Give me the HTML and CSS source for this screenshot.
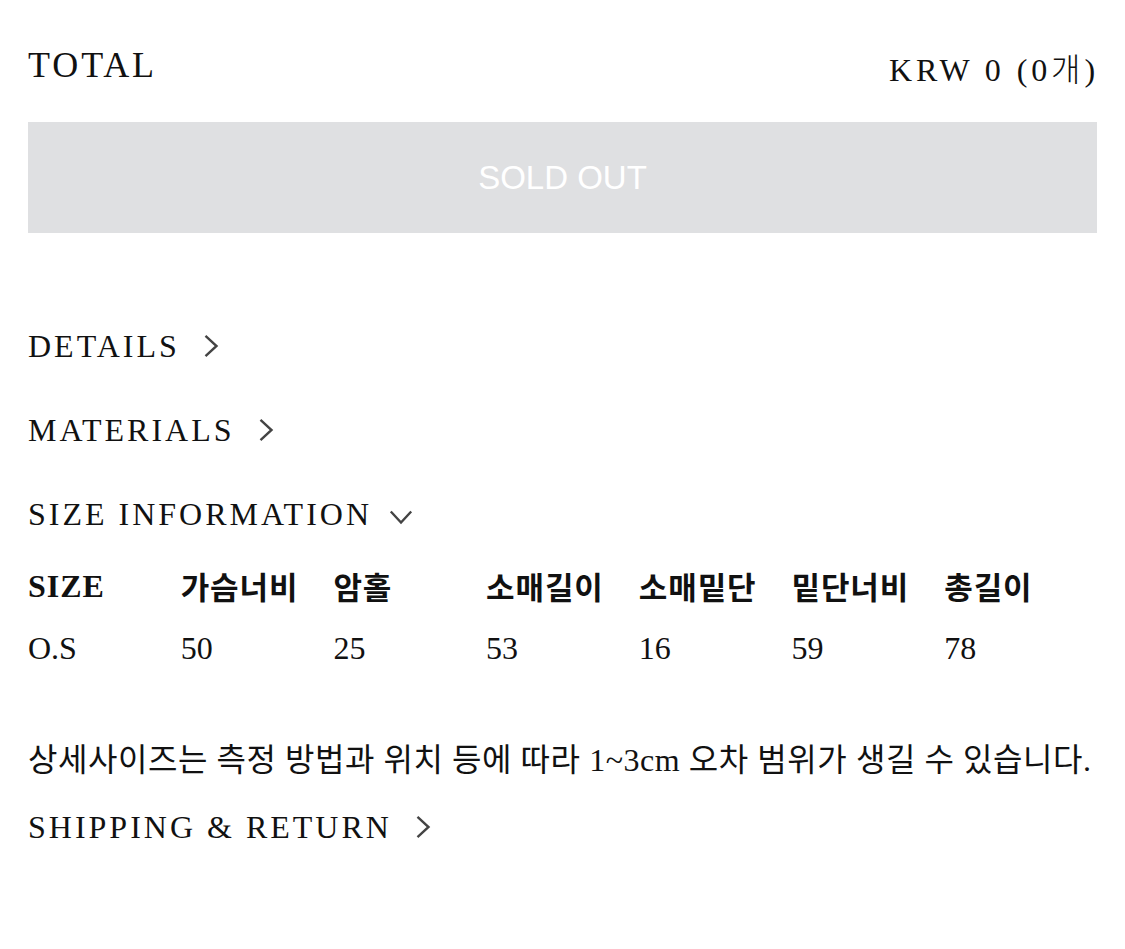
FILE: index.html
```html
<!DOCTYPE html>
<html lang="ko">
<head>
<meta charset="utf-8">
<title>Product</title>
<link rel="stylesheet" href="styles.css">
</head>
<body>
<div class="page">
  <div class="total-row">
    <span class="total-label">TOTAL</span>
    <span class="total-price">KRW 0 (0<span class="ko">개</span>)</span>
  </div>
  <button class="sold-out" type="button">SOLD OUT</button>

  <div class="acc">
    <div class="acc-item">
      <span class="acc-title">DETAILS</span>
      <svg class="chev-right" width="16" height="24" viewBox="0 0 16 24"><polyline points="2.5,1.8 13.5,12 2.5,22.2" fill="none" stroke="#444" stroke-width="2.4"/></svg>
    </div>
    <div class="acc-item">
      <span class="acc-title">MATERIALS</span>
      <svg class="chev-right" width="16" height="24" viewBox="0 0 16 24"><polyline points="2.5,1.8 13.5,12 2.5,22.2" fill="none" stroke="#444" stroke-width="2.4"/></svg>
    </div>
    <div class="acc-item">
      <span class="acc-title">SIZE INFORMATION</span>
      <svg class="chev-down" width="24" height="16" viewBox="0 0 24 16"><polyline points="1.8,2.5 12,13.5 22.2,2.5" fill="none" stroke="#444" stroke-width="2.4"/></svg>
    </div>
  </div>

  <table class="size-table">
    <thead>
      <tr>
        <th class="th-latin">SIZE</th>
        <th>가슴너비</th>
        <th>암홀</th>
        <th>소매길이</th>
        <th>소매밑단</th>
        <th>밑단너비</th>
        <th>총길이</th>
      </tr>
    </thead>
    <tbody>
      <tr>
        <td>O.S</td>
        <td>50</td>
        <td>25</td>
        <td>53</td>
        <td>16</td>
        <td>59</td>
        <td>78</td>
      </tr>
    </tbody>
  </table>

  <p class="note">상세사이즈는 측정 방법과 위치 등에 따라 1~3cm 오차 범위가 생길 수 있습니다.</p>

  <div class="acc-item shipping">
    <span class="acc-title">SHIPPING &amp; RETURN</span>
    <svg class="chev-right" width="16" height="24" viewBox="0 0 16 24"><polyline points="2.5,1.8 13.5,12 2.5,22.2" fill="none" stroke="#444" stroke-width="2.4"/></svg>
  </div>
</div>
</body>
</html>
```

FILE: styles.css
```css
html, body {
  margin: 0;
  padding: 0;
  background: #ffffff;
}

body {
  font-family: "Liberation Serif", "Noto Sans CJK KR", serif;
  color: #111111;
}

.page {
  padding: 0 28px;
  width: 1069px;
}

.total-row {
  display: flex;
  justify-content: space-between;
  align-items: flex-start;
  padding-top: 47px;
  height: 41px;
}

.total-label {
  font-size: 36px;
  line-height: 36px;
  letter-spacing: 2.9px;
}

.total-price {
  font-size: 32px;
  line-height: 32px;
  letter-spacing: 3.9px;
  margin-top: 4px;
  margin-right: -2px;
}

.ko {
  font-family: "Noto Sans CJK KR", sans-serif;
  font-weight: 300;
}

.sold-out {
  display: block;
  width: 100%;
  height: 111px;
  margin: 34px 0 0;
  border: 0;
  padding: 0;
  background: #dfe0e2;
  color: #ffffff;
  font-family: "Liberation Sans", sans-serif;
  font-size: 33px;
  line-height: 111px;
}

.acc {
  margin-top: 71px;
}

.acc-item {
  display: flex;
  align-items: center;
  height: 84px;
}

.acc-title {
  font-size: 32px;
  line-height: 84px;
  letter-spacing: 3px;
}

.chev-right {
  margin-left: 23px;
  margin-top: -1px;
}

.chev-down {
  margin-left: 17px;
  margin-top: 6px;
}

.size-table {
  width: 100%;
  border-collapse: collapse;
  table-layout: fixed;
}

.size-table th,
.size-table td {
  padding: 0;
  text-align: left;
  vertical-align: middle;
}

.size-table th {
  font-family: "Noto Sans CJK KR", sans-serif;
  font-weight: 700;
  font-size: 31px;
  letter-spacing: 0.9px;
  height: 60px;
  line-height: 60px;
}

.size-table th.th-latin {
  font-family: "Liberation Serif", serif;
  font-size: 32px;
  letter-spacing: 1px;
}

.size-table td {
  font-size: 32px;
  height: 64px;
  line-height: 64px;
}

.note {
  margin: 60px 0 0;
  font-size: 32px;
  line-height: 40px;
  letter-spacing: 0.55px;
  white-space: nowrap;
}

.shipping {
  margin-top: 5px;
}
```
